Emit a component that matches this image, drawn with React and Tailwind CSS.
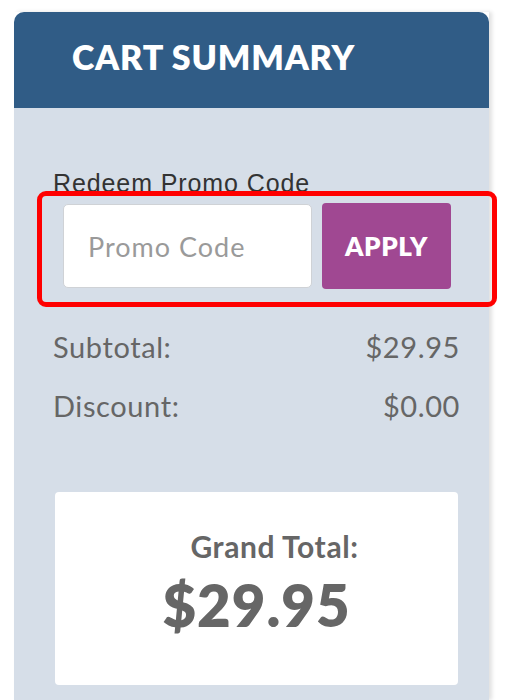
const CartSummary = () => {
  return (
    <div className="w-[475px] shadow-[3px_0_4px_rgba(0,0,0,0.12)]">
      <div className="h-[96px] bg-[#305c86] rounded-t-[10px] pl-[58px] pt-[25px]">
        <h2 className="text-white font-[Lato,sans-serif] font-extrabold text-[34px] leading-[40px] tracking-[0.8px]">
          CART SUMMARY
        </h2>
      </div>

      <div className="bg-[#d6dee8] min-h-[592px] pl-[39px] pr-[29px] pt-[61px]">
        <label className="block text-[#333] font-['Liberation_Sans',Arial,sans-serif] text-[25px] leading-[28px] tracking-[0.9px]">
          Redeem Promo Code
        </label>

        <div className="relative flex items-center gap-[10px] ml-[10px] mt-[6px]">
          <input
            type="text"
            placeholder="Promo Code"
            className="w-[249px] h-[84px] bg-white border border-[#cfd2d6] rounded-[5px] pl-[24px] text-[27px] tracking-[1px] font-[Lato,sans-serif] text-[#555] placeholder:text-[#9a9a9a] outline-none"
          />
          <button className="w-[129px] h-[86px] bg-[#a04892] rounded-[4px] text-white font-[Lato,sans-serif] font-extrabold text-[26px] tracking-[0.6px]">
            APPLY
          </button>
          <div className="absolute left-[-26px] top-[-12px] w-[460px] h-[116px] border-[5px] border-[#ff0000] rounded-[9px] pointer-events-none" />
        </div>

        <div className="font-[Lato,sans-serif] text-[#666] text-[29px] tracking-[0.6px] mt-[40px]">
          <div className="flex justify-between leading-[36px]">
            <span>Subtotal:</span>
            <span>$29.95</span>
          </div>
          <div className="flex justify-between leading-[36px] mt-[23px]">
            <span>Discount:</span>
            <span>$0.00</span>
          </div>
        </div>

        <div className="mt-[68px] ml-[2px] mr-[2px] h-[193px] bg-white rounded-[4px] flex flex-col items-center pt-[37px] font-[Lato,sans-serif] text-[#666]">
          <div className="font-bold text-[30px] leading-[34px] tracking-[0.6px] pl-[36px]">Grand Total:</div>
          <div className="font-extrabold text-[58px] leading-[64px] tracking-[1px] mt-[10px]">$29.95</div>
        </div>
      </div>
    </div>
  );
};

export default function App() {
  return (
    <div className="min-h-[700px] bg-white pt-[12px] pl-[14px] overflow-hidden">
      <CartSummary />
    </div>
  );
}
